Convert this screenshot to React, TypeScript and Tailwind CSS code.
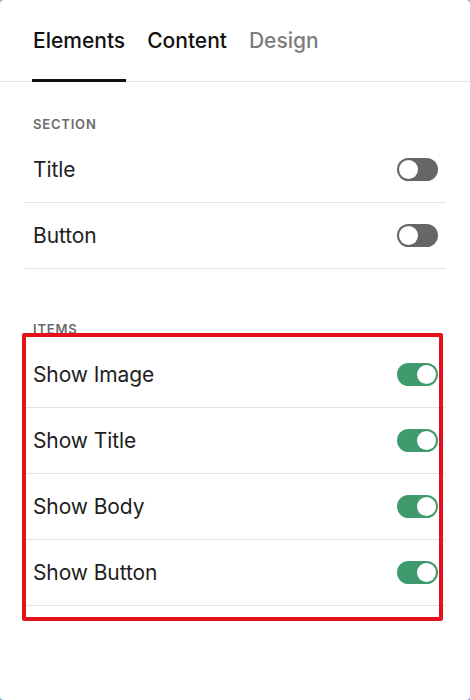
import React from "react";

function Toggle({ on }: { on: boolean }) {
  return (
    <div
      className={
        "relative w-[41px] h-[23px] rounded-full shrink-0 " +
        (on ? "bg-[#3f9a6e]" : "bg-[#666666]")
      }
    >
      <div
        className={
          "absolute top-[2px] w-[19px] h-[19px] rounded-full bg-white " +
          (on ? "right-[2px]" : "left-[2px]")
        }
      />
    </div>
  );
}

function Row({ label, on }: { label: string; on: boolean }) {
  return (
    <div className="flex items-center justify-between h-[66px] border-b border-[#e4e4e4] pl-2 pr-2">
      <span className="text-[21px] text-[#1e1e1e] tracking-[-0.1px]">{label}</span>
      <Toggle on={on} />
    </div>
  );
}

export default function App() {
  return (
    <div className="w-[470px] h-[700px] bg-[#7a9fe0]" style={{ fontFamily: "Inter, 'Noto Sans', sans-serif" }}>
      <div className="relative w-full h-full bg-white rounded-[4px] overflow-hidden">
        <div className="flex gap-[22px] px-[33px] h-[82px] border-b border-[#e2e2e2] items-stretch">
          <div className="relative flex items-center">
            <span className="text-[21px] font-medium text-[#111]">Elements</span>
            <div className="absolute left-[-1px] right-[-1px] bottom-[-1px] h-[3px] bg-[#111]" />
          </div>
          <div className="flex items-center">
            <span className="text-[21px] font-medium text-[#111]">Content</span>
          </div>
          <div className="flex items-center">
            <span className="text-[21px] font-medium text-[#7d7d7d]">Design</span>
          </div>
        </div>

        <div className="px-[25px] pr-[24px]">
          <div className="pl-2 pt-[33px] pb-[4px] text-[13px] font-semibold tracking-[0.8px] text-[#6b6b6b] leading-[18px]">
            SECTION
          </div>
          <Row label="Title" on={false} />
          <Row label="Button" on={false} />

          <div className="pl-2 pt-[52px] pb-[5px] text-[13px] font-semibold tracking-[0.8px] text-[#6b6b6b] leading-[16px]">
            ITEMS
          </div>
          <Row label="Show Image" on={true} />
          <Row label="Show Title" on={true} />
          <Row label="Show Body" on={true} />
          <Row label="Show Button" on={true} />
        </div>

        <div className="absolute left-[22px] top-[333px] w-[421px] h-[288px] border-[4px] border-[#e5121b] rounded-[2px] pointer-events-none" />
      </div>
    </div>
  );
}
